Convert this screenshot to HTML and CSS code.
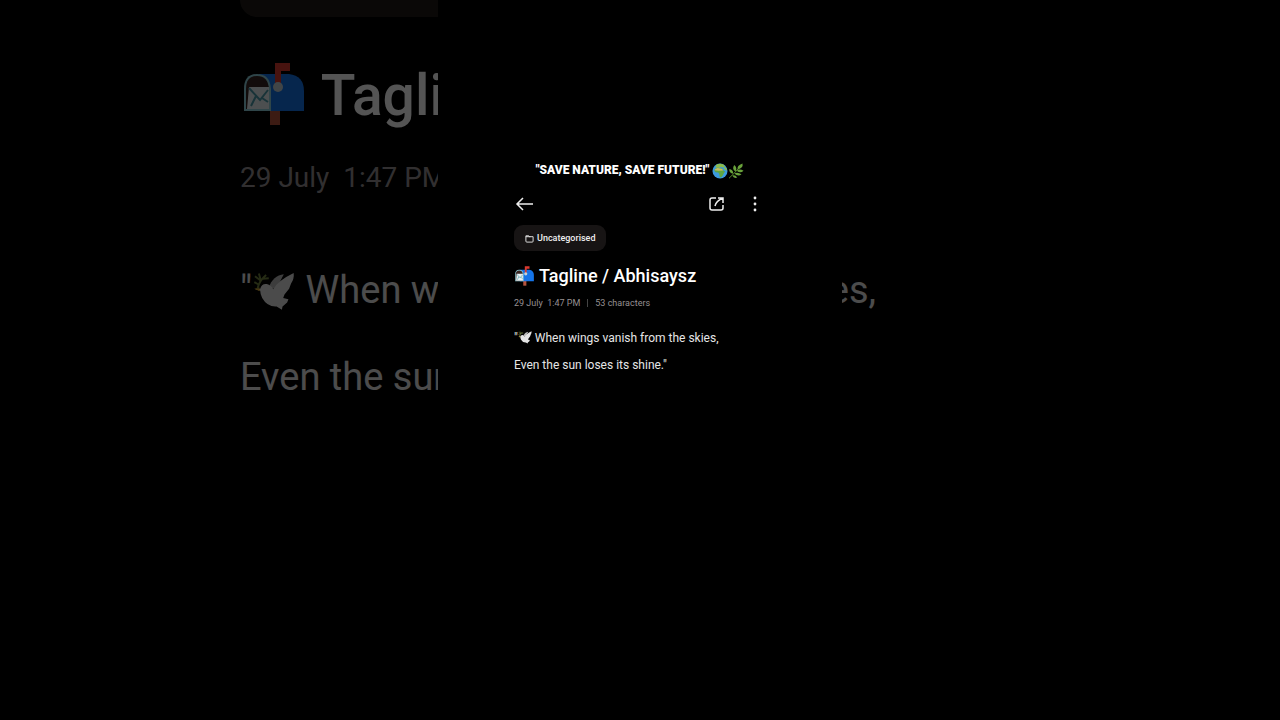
FILE: index.html
```html
<!DOCTYPE html>
<html lang="en">
<head>
  <meta charset="UTF-8" />
  <meta name="viewport" content="width=device-width, initial-scale=1.0"/>
  <title>Tagline / Abhisaysz</title>
  <link rel="stylesheet" href="styles.css">
</head>
<body>

  <svg class="sprite" aria-hidden="true">
    <symbol id="mailbox" viewBox="0 0 64 64">
      <path d="M28 46h10v17H28z" fill="#b5533c"/>
      <path d="M17 12h30q15 2 15 17v20H17z" fill="#1574e8"/>
      <path d="M2 49V27Q2 12 15 12T29 27v22z" fill="#8fd0dc"/>
      <path d="M4 47V27Q4 14 15 14T27 27v20z" fill="#392522"/>
      <path d="M7 25h20v22H5z" fill="#e6f0f2"/>
      <path d="M7 26l11 12 8-10M9 44l5-10M26 40l-6-4" fill="none" stroke="#4b9aaa" stroke-width="2"/>
      <path d="M33 1h15v8H39v16h-6z" fill="#d93a30"/>
      <circle cx="36" cy="25" r="5" fill="#c6d1d6"/>
    </symbol>
    <symbol id="dove" viewBox="0 0 64 64">
      <path d="M24 28C28 17 36 9 47 8L35 31z" fill="#b9b9b9"/>
      <path d="M11 30Q13 22 21 23Q28 25 31 31Q37 18 62 6Q63 15 58 22L55 30 48 39 46 44 54 46 52 51 45 57 44 62 36 57Q22 58 14 44Q11 38 11 33L3 31z" fill="#e4e4e4"/>
      <path d="M10 28l-8 2 8 4z" fill="#d6a52c"/>
      <path d="M7 30Q9 18 20 9M12 18L3 11M12 18L9 7M15 15l9-1M9 24l-7-4" fill="none" stroke="#71823f" stroke-width="3"/>
    </symbol>
    <symbol id="globe" viewBox="0 0 64 64">
      <circle cx="32" cy="32" r="30" fill="#3c9be0"/>
      <path d="M16 8Q30 0 44 5L52 12 46 18 36 16 24 20 14 17z" fill="#8dbb4a"/>
      <path d="M13 23L22 19 34 21 42 23 47 32 53 33 47 42 43 50 36 58 31 56 29 44 25 38 14 37 9 30z" fill="#5fa641"/>
      <path d="M13 24l9-4 12 2 8 2 2 6-18 1-16-2z" fill="#c3bd63"/>
      <path d="M50 15l7 6 3 10-7-3-6-8z" fill="#8dbb4a"/>
    </symbol>
    <symbol id="herb" viewBox="0 0 64 64">
      <path d="M4 61Q24 43 50 13" fill="none" stroke="#578a2b" stroke-width="4"/>
      <path d="M39 26Q34 10 58 2 62 20 39 26zM30 34Q14 24 25 8 39 20 30 34zM21 43Q4 41 5 24 21 26 21 43zM35 31Q47 21 62 31 50 43 35 31zM25 42Q38 34 54 45 41 56 25 42zM17 50Q29 46 37 58 24 64 17 50z" fill="#69a23b"/>
    </symbol>
  </svg>

  <div class="page">
    <!-- enlarged copy of the note, cut off by the screen -->
    <div class="backdrop left" aria-hidden="true">
      <div class="backdrop-chip"></div>
      <div class="backdrop-title"><svg class="emoji"><use href="#mailbox"/></svg> Tagli</div>
      <div class="backdrop-meta">29 July&nbsp; 1:47 PM</div>
      <div class="backdrop-text">"<svg class="emoji"><use href="#dove"/></svg> When w<br>Even the sun</div>
    </div>

    <main class="screen">
      <p class="banner">"Save Nature, Save Future!" <svg class="emoji" role="img" aria-label="Globe"><use href="#globe"/></svg><svg class="emoji" role="img" aria-label="Herb"><use href="#herb"/></svg></p>

      <header class="toolbar">
        <button class="icon-btn" aria-label="Back">
          <svg viewBox="0 0 24 24"><path d="M20 12H4M10 6l-6 6 6 6"/></svg>
        </button>
        <div class="actions">
          <button class="icon-btn" aria-label="Share">
            <svg viewBox="0 0 24 24"><path d="M11 6H7q-2 0-2 2v8q0 2 2 2h9q2 0 2-2v-3M10 14q1-5 8-8M13 6h5v5"/></svg>
          </button>
          <button class="icon-btn" aria-label="More options">
            <svg viewBox="0 0 24 24"><g class="dots"><circle cx="12" cy="6" r="1.4"/><circle cx="12" cy="12" r="1.4"/><circle cx="12" cy="18" r="1.4"/></g></svg>
          </button>
        </div>
      </header>

      <article class="note">
        <button class="chip">
          <svg viewBox="0 0 10 10"><path d="M1 2h3l1 1h4v5q0 1-1 1H2q-1 0-1-1zM1 3h5"/></svg>
          Uncategorised
        </button>
        <h1><svg class="emoji" role="img" aria-label="Mailbox"><use href="#mailbox"/></svg> Tagline / Abhisaysz</h1>
        <div class="meta">
          <span>29 July&nbsp; 1:47 PM</span>
          <span class="divider"></span>
          <span>53 characters</span>
        </div>
        <p class="text">"<svg class="emoji" role="img" aria-label="Dove"><use href="#dove"/></svg> When wings vanish from the skies,<br>Even the sun loses its shine."</p>
      </article>
    </main>

    <div class="backdrop right" aria-hidden="true">
      <div class="backdrop-text">es,</div>
    </div>
  </div>

</body>
</html>
```

FILE: styles.css
```css
* {
  box-sizing: border-box;
}
body {
  margin: 0;
  background: #000;
  color: #fff;
  font-family: Roboto, Arial, sans-serif;
}
h1, p {
  margin: 0;
}
button {
  padding: 0;
  border: 0;
  background: none;
  color: inherit;
  font-family: inherit;
  cursor: pointer;
}
.sprite {
  position: absolute;
  width: 0;
  height: 0;
}
.page {
  display: grid;
  grid-template-columns: 1fr minmax(0, 404px) 1fr;
  min-height: 100vh;
}

.backdrop {
  min-width: 0;
  overflow: hidden;
  opacity: 0.33;
  white-space: nowrap;
}
.left {
  padding-left: 240px;
}
.right {
  display: flex;
  align-items: flex-start;
  padding-top: 198px;
}
.right .backdrop-text {
  display: flex;
  justify-content: flex-end;
  width: 34px;
  overflow: hidden;
}
.backdrop-chip {
  width: 292px;
  height: 17px;
  border-radius: 0 0 32px 32px;
  background: #1f1b18;
}
.backdrop-title {
  margin-top: 39px;
  font-size: 57px;
  font-weight: 500;
  line-height: 80px;
}
.backdrop-meta {
  margin-top: 22px;
  color: #969092;
  font-size: 28px;
  line-height: 40px;
}
.backdrop-text {
  margin-top: 49px;
  color: #e6e6e6;
  font-size: 38px;
  line-height: 87px;
}
.backdrop-title .emoji {
  width: 68px;
  height: 64px;
}
.backdrop-text .emoji {
  width: 44px;
  height: 42px;
}

.screen {
  padding: 160px 76px 0;
}
.emoji {
  vertical-align: -0.2em;
}
.banner {
  font-size: 12px;
  font-weight: 900;
  line-height: 20px;
  text-align: center;
  text-transform: uppercase;
  white-space: nowrap;
}
.banner .emoji {
  width: 16px;
  height: 16px;
  vertical-align: middle;
}
.toolbar {
  display: flex;
  justify-content: space-between;
  margin: 12px -1px 0;
}
.actions {
  display: flex;
  gap: 14px;
}
.icon-btn {
  width: 24px;
  height: 24px;
}
.icon-btn svg {
  display: block;
  fill: none;
  stroke: #eee;
  stroke-width: 1.5;
}
.icon-btn .dots {
  fill: #eee;
  stroke: none;
}

.chip {
  display: flex;
  align-items: center;
  gap: 3px;
  height: 26px;
  margin-top: 9px;
  padding: 0 11px;
  border-radius: 9px;
  background: #171414;
  color: #eee;
  font-size: 9px;
  font-weight: 500;
}
.chip svg {
  width: 9px;
  height: 9px;
  fill: none;
  stroke: currentColor;
}
h1 {
  margin-top: 12px;
  font-size: 18px;
  font-weight: 500;
  line-height: 26px;
  white-space: nowrap;
}
h1 .emoji {
  width: 21px;
  height: 20px;
}
.meta {
  display: flex;
  align-items: center;
  margin-top: 7px;
  color: #969092;
  font-size: 9px;
  line-height: 14px;
}
.divider {
  width: 1px;
  height: 8px;
  margin: 0 7px;
  background: #444;
}
.text {
  margin-top: 15px;
  color: #e6e6e6;
  font-size: 12px;
  line-height: 27px;
  white-space: nowrap;
}
.text .emoji {
  width: 14px;
  height: 14px;
}
```
